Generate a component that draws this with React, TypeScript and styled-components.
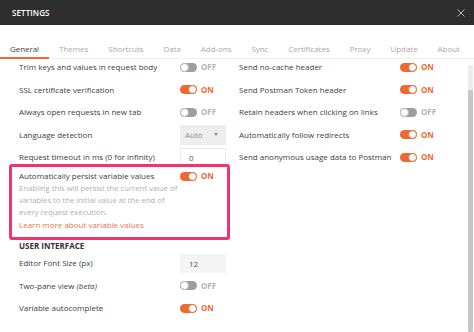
import React from 'react'
import styled, { createGlobalStyle } from 'styled-components'

const GlobalStyle = createGlobalStyle`
  html, body {
    margin: 0;
    padding: 0;
    background: #ffffff;
  }
  body {
    font-family: 'Open Sans', 'Liberation Sans', sans-serif;
    -webkit-font-smoothing: antialiased;
  }
  * {
    box-sizing: border-box;
  }
`

const ORANGE = '#ec6a32'
const PINK = '#f2336f'

const Window = styled.div`
  width: 474px;
  height: 332px;
  overflow: hidden;
  display: flex;
  flex-flow: column nowrap;
  background: #ffffff;
`

const Header = styled.header`
  height: 25px;
  flex: 0 0 25px;
  background: #2e2e2e;
  display: flex;
  align-items: center;
  justify-content: space-between;
  padding: 0 9px 0 12px;
`

const Title = styled.h1`
  margin: 0;
  font-size: 8px;
  font-weight: 600;
  color: #ffffff;
  letter-spacing: 0.1px;
`

const CloseButton = styled.button`
  border: 0;
  padding: 0;
  background: none;
  display: flex;
  width: 8px;
  height: 8px;
`

const TabBar = styled.nav`
  height: 34px;
  flex: 0 0 34px;
  display: flex;
  align-items: flex-end;
  box-shadow: inset 0 -1px 0 #efefef;
`

const Tab = styled.div<{ $active?: boolean }>`
  padding: 0 10px 3px;
  line-height: 11px;
  font-size: 8px;
  letter-spacing: -0.05px;
  color: ${(p) => (p.$active ? '#444444' : '#a9a9a9')};
  border-bottom: 2px solid ${(p) => (p.$active ? ORANGE : 'transparent')};
`

const Body = styled.div`
  flex: 1;
  display: flex;
  min-height: 0;
`

const Content = styled.div`
  flex: 1;
  display: grid;
  grid-template-columns: 220px 1fr;
  align-items: start;
  padding-left: 19px;
  margin-top: -3px;
`

const Column = styled.section`
  display: flex;
  flex-flow: column nowrap;
`

const Row = styled.div`
  height: 22.5px;
  display: grid;
  grid-template-columns: 161px auto;
  align-items: center;
`

const Label = styled.span`
  font-size: 8px;
  line-height: 12px;
  color: #3d3d3d;
  white-space: nowrap;
  em {
    font-style: italic;
  }
`

const ToggleWrap = styled.div`
  display: flex;
  align-items: center;
  gap: 4px;
`

const Track = styled.span<{ $on: boolean }>`
  width: 17px;
  height: 9px;
  border-radius: 5px;
  display: flex;
  justify-content: ${(p) => (p.$on ? 'flex-end' : 'flex-start')};
  background: ${(p) => (p.$on ? ORANGE : '#9d9d9d')};
`

const Knob = styled.span<{ $on: boolean }>`
  width: 9px;
  height: 9px;
  border-radius: 50%;
  background: #ffffff;
  border: 1px solid ${(p) => (p.$on ? ORANGE : '#b9b9b9')};
`

const State = styled.span<{ $on: boolean }>`
  font-size: 8px;
  font-weight: 700;
  line-height: 12px;
  color: ${(p) => (p.$on ? ORANGE : '#b3b3b3')};
`

const Select = styled.div`
  width: 46px;
  height: 20px;
  background: #eeeeee;
  display: flex;
  align-items: center;
  justify-content: space-between;
  padding: 0 8px 0 5px;
  font-size: 8px;
  color: #8a8a8a;
`

const Caret = styled.span`
  width: 0;
  height: 0;
  border-left: 2.5px solid transparent;
  border-right: 2.5px solid transparent;
  border-top: 3px solid #8a8a8a;
`

const Input = styled.div<{ $filled?: boolean }>`
  width: 46px;
  height: 19px;
  display: flex;
  align-items: center;
  padding-left: 8px;
  font-size: 8px;
  color: #555555;
  background: ${(p) => (p.$filled ? '#f4f4f4' : '#ffffff')};
  border: 1px solid ${(p) => (p.$filled ? '#f4f4f4' : '#ececec')};
`

const Highlight = styled.div`
  position: relative;
  background: #ffffff;
  margin: -4.5px 0 0 -10px;
  width: 221px;
  height: 76px;
  border: 3px solid ${PINK};
  border-radius: 3px;
  padding: 3px 0 6px 7px;
`

const HighlightHead = styled.div`
  display: grid;
  grid-template-columns: 161px auto;
  align-items: center;
  height: 12px;
`

const Description = styled.p`
  margin: 1.4px 0 0;
  font-size: 7.7px;
  line-height: 11.8px;
  color: #b0b0b0;
  white-space: nowrap;
`

const LearnLink = styled.a`
  display: block;
  font-size: 8px;
  line-height: 12px;
  color: #ee7444;
  text-decoration: none;
`

const SectionTitle = styled.h2`
  margin: 0;
  height: 12px;
  font-size: 8px;
  line-height: 12px;
  font-weight: 700;
  color: #333333;
`

const Scrollbar = styled.div`
  flex: 0 0 5px;
  margin: 6px 1px 0 0;
  display: flex;
  flex-flow: column nowrap;
  background: #ececec;
`

const Thumb = styled.div`
  margin-top: 25px;
  flex: 1;
  background: #c6c6c6;
  border-radius: 1px;
`

const Toggle: React.FC<{ on: boolean }> = ({ on }) => (
  <ToggleWrap>
    <Track $on={on}>
      <Knob $on={on} />
    </Track>
    <State $on={on}>{on ? 'ON' : 'OFF'}</State>
  </ToggleWrap>
)

const tabs = ['General', 'Themes', 'Shortcuts', 'Data', 'Add-ons', 'Sync', 'Certificates', 'Proxy', 'Update', 'About']

const rightRows: [string, boolean][] = [
  ['Send no-cache header', true],
  ['Send Postman Token header', true],
  ['Retain headers when clicking on links', false],
  ['Automatically follow redirects', true],
  ['Send anonymous usage data to Postman', true],
]

export default function App() {
  return (
    <>
      <GlobalStyle />
      <Window>
        <Header>
          <Title>SETTINGS</Title>
          <CloseButton aria-label='close'>
            <svg width='8' height='8' viewBox='0 0 8 8'>
              <path d='M0.5 0.5 L7.5 7.5 M7.5 0.5 L0.5 7.5' stroke='#b5b5b5' strokeWidth='1' />
            </svg>
          </CloseButton>
        </Header>
        <TabBar>
          {tabs.map((t, i) => (
            <Tab key={t} $active={i === 0}>
              {t}
            </Tab>
          ))}
        </TabBar>
        <Body>
          <Content>
            <Column>
              <Row>
                <Label>Trim keys and values in request body</Label>
                <Toggle on={false} />
              </Row>
              <Row>
                <Label>SSL certificate verification</Label>
                <Toggle on />
              </Row>
              <Row>
                <Label>Always open requests in new tab</Label>
                <Toggle on={false} />
              </Row>
              <Row>
                <Label>Language detection</Label>
                <Select>
                  Auto
                  <Caret />
                </Select>
              </Row>
              <Row>
                <Label>Request timeout in ms (0 for infinity)</Label>
                <Input>0</Input>
              </Row>
              <Highlight>
                <HighlightHead>
                  <Label>Automatically persist variable values</Label>
                  <Toggle on />
                </HighlightHead>
                <Description>
                  Enabling this will persist the current value of
                  <br />
                  variables to the initial value at the end of
                  <br />
                  every request execution.
                </Description>
                <LearnLink href='#'>Learn more about variable values</LearnLink>
              </Highlight>
              <SectionTitle>USER INTERFACE</SectionTitle>
              <Row>
                <Label>Editor Font Size (px)</Label>
                <Input $filled>12</Input>
              </Row>
              <Row>
                <Label>
                  Two-pane view <em>(beta)</em>
                </Label>
                <Toggle on={false} />
              </Row>
              <Row>
                <Label>Variable autocomplete</Label>
                <Toggle on />
              </Row>
            </Column>
            <Column>
              {rightRows.map(([label, on]) => (
                <Row key={label}>
                  <Label>{label}</Label>
                  <Toggle on={on} />
                </Row>
              ))}
            </Column>
          </Content>
          <Scrollbar>
            <Thumb />
          </Scrollbar>
        </Body>
      </Window>
    </>
  )
}
